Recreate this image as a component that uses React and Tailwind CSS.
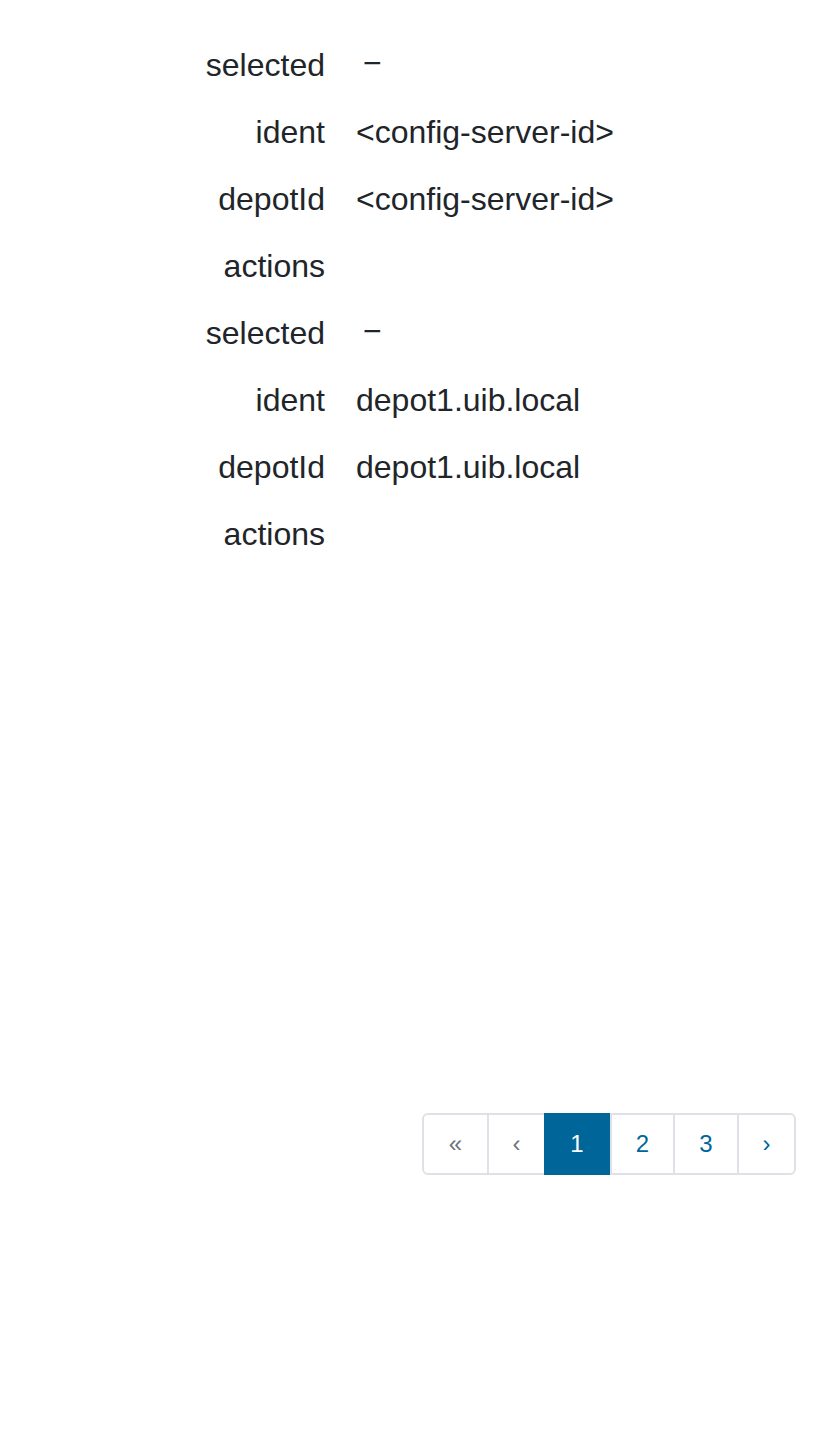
const rows = [
  { label: 'selected', value: '−', dash: true },
  { label: 'ident', value: '<config-server-id>' },
  { label: 'depotId', value: '<config-server-id>' },
  { label: 'actions', value: '' },
  { label: 'selected', value: '−', dash: true },
  { label: 'ident', value: 'depot1.uib.local' },
  { label: 'depotId', value: 'depot1.uib.local' },
  { label: 'actions', value: '' },
];

const pages = [
  { t: '«', cls: 'w-[63px] text-[#6c757d]' },
  { t: '‹', cls: 'w-[57px] text-[#6c757d] border-l-2 border-[#dee2e6]' },
  { t: '1', cls: 'w-[66px] h-[62px] -my-[2px] bg-[#00669a] text-white' },
  { t: '2', cls: 'w-[63px] text-[#00669a] border-l-2 border-[#dee2e6]' },
  { t: '3', cls: 'w-[64px] text-[#00669a] border-l-2 border-[#dee2e6]' },
  { t: '›', cls: 'w-[57px] text-[#00669a] border-l-2 border-[#dee2e6]' },
];

export default function App() {
  return (
    <div className="w-[828px] h-[1430px] bg-white text-[#212529]" style={{ fontFamily: '"Liberation Sans", Arial, sans-serif' }}>
      <div className="pt-[31px]">
        {rows.map((r, i) => (
          <div key={i} className="flex items-center h-[67px] text-[32px]">
            <div className="w-[325px] text-right">{r.label}</div>
            <div className="pl-[31px]">
              {r.dash ? <span className="ml-[7px] relative -top-[2px]">{r.value}</span> : r.value}
            </div>
          </div>
        ))}
      </div>
      <div className="flex justify-end pr-[32px] mt-[546px]">
        <ul className="flex h-[62px] border-2 border-[#dee2e6] rounded-[6px] text-[24px]">
          {pages.map((p, i) => (
            <li key={i} className={`${p.cls} flex items-center justify-center`}>
              {p.t}
            </li>
          ))}
        </ul>
      </div>
    </div>
  );
}
